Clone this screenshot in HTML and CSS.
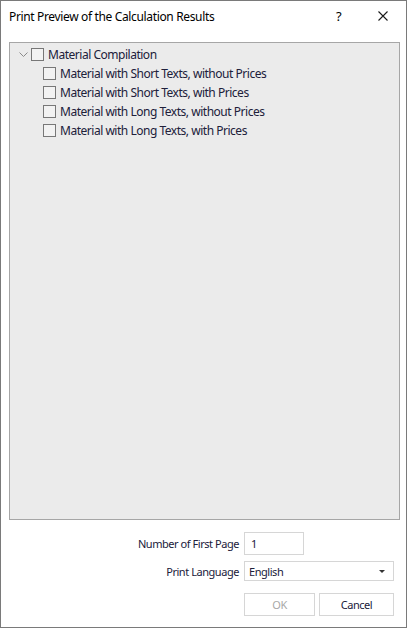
FILE: index.html
```html
<!DOCTYPE html>
<html lang="en">
<head>
<meta charset="utf-8">
<title>Print Preview of the Calculation Results</title>
<link rel="stylesheet" href="styles.css">
</head>
<body>
<div class="window">
  <div class="titlebar">
    <span class="title">Print Preview of the Calculation Results</span>
    <span class="help">?</span>
    <span class="close">
      <svg width="10" height="10" viewBox="0 0 10 10"><path d="M0.5 0.5 L9.5 9.5 M9.5 0.5 L0.5 9.5" stroke="#1a1a1a" stroke-width="1.1" fill="none"/></svg>
    </span>
  </div>
  <div class="panel">
    <div class="row root">
      <svg class="chev" width="9" height="5" viewBox="0 0 9 5"><path d="M0.5 0.5 L4.5 4.5 L8.5 0.5" stroke="#8a8a8a" stroke-width="1" fill="none"/></svg>
      <span class="cb"></span>
      <span class="label">Material Compilation</span>
    </div>
    <div class="row child"><span class="cb"></span><span class="label">Material with Short Texts, without Prices</span></div>
    <div class="row child"><span class="cb"></span><span class="label">Material with Short Texts, with Prices</span></div>
    <div class="row child"><span class="cb"></span><span class="label">Material with Long Texts, without Prices</span></div>
    <div class="row child"><span class="cb"></span><span class="label">Material with Long Texts, with Prices</span></div>
  </div>
  <div class="form">
    <div class="frow r1">
      <span class="flabel">Number of First Page</span>
      <span class="input">1</span>
    </div>
    <div class="frow r2">
      <span class="flabel">Print Language</span>
      <span class="select">English<span class="arrow"></span></span>
    </div>
    <div class="frow r3">
      <span class="btn ok">OK</span>
      <span class="btn cancel">Cancel</span>
    </div>
  </div>
</div>
</body>
</html>
```
FILE: styles.css
```css
html, body {
  margin: 0;
  padding: 0;
  background: #ffffff;
}
.window {
  width: 407px;
  height: 628px;
  box-sizing: border-box;
  border: 1px solid #7a7a7a;
  background: #ffffff;
  font-family: "Noto Sans", "Open Sans", sans-serif;
  font-size: 11px;
  letter-spacing: -0.45px;
  color: #20203a;
  display: flex;
  flex-direction: column;
}
.titlebar {
  height: 30px;
  display: flex;
  align-items: center;
  padding-left: 8px;
  flex-shrink: 0;
}
.title {
  flex: 1;
  color: #000;
  font-size: 12px;
  letter-spacing: -0.35px;
}
.help {
  width: 10px;
  margin-right: 32px;
  color: #000;
  font-size: 13px;
  letter-spacing: 0;
}
.close {
  width: 10px;
  height: 10px;
  margin-right: 18px;
  display: flex;
}
.panel {
  margin: 11px 6px 0 8px;
  height: 478px;
  box-sizing: border-box;
  border: 1px solid #a6a6a6;
  background: #ebebeb;
  padding-top: 2px;
  flex-shrink: 0;
  font-size: 12px;
  letter-spacing: -0.48px;
}
.row {
  height: 19px;
  display: flex;
  align-items: center;
}
.root {
  padding-left: 9px;
}
.chev {
  margin-right: 3px;
  margin-top: -1px;
}
.child {
  padding-left: 33px;
}
.cb {
  width: 13px;
  height: 13px;
  box-sizing: border-box;
  border: 1px solid #777777;
  background: #f2f2f2;
  margin-right: 4px;
  margin-top: -1px;
  flex-shrink: 0;
}
.label {
  white-space: nowrap;
}
.form {
  padding: 12px 12px 0 0;
  display: flex;
  flex-direction: column;
}
.frow {
  display: flex;
  justify-content: flex-end;
  align-items: center;
}
.flabel {
  margin-right: 5px;
}
.r2 {
  margin-top: 6px;
}
.r3 {
  margin-top: 12px;
  gap: 4px;
}
.input {
  width: 60px;
  height: 23px;
  box-sizing: border-box;
  border: 1px solid #d6d6d6;
  padding: 0 6px;
  margin-right: 90px;
  display: flex;
  align-items: center;
  background: #fff;
}
.select {
  width: 150px;
  height: 20px;
  box-sizing: border-box;
  border: 1px solid #d6d6d6;
  padding: 0 4px;
  display: flex;
  align-items: center;
  position: relative;
  background: #fff;
}
.arrow {
  position: absolute;
  right: 8px;
  top: 8px;
  width: 0;
  height: 0;
  border-left: 3px solid transparent;
  border-right: 3px solid transparent;
  border-top: 3px solid #333;
}
.btn {
  height: 23px;
  box-sizing: border-box;
  border: 1px solid #d6d6d6;
  display: flex;
  align-items: center;
  justify-content: center;
  background: #fff;
}
.ok {
  width: 71px;
  color: #a8a8a8;
}
.cancel {
  width: 75px;
  color: #20203a;
}
```
